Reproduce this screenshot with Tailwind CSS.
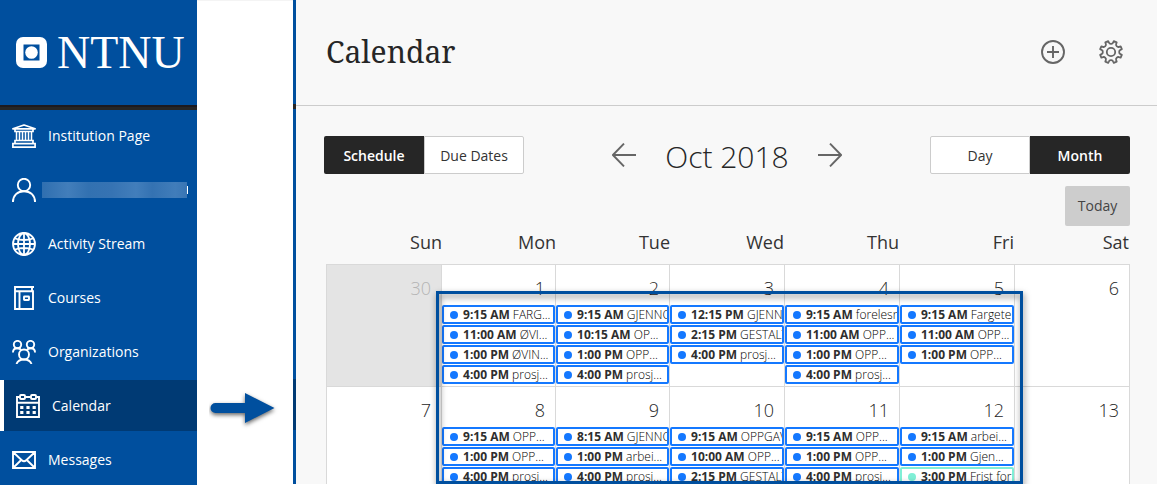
<!DOCTYPE html>
<html lang="en">
<head>
<meta charset="utf-8">
<meta name="viewport" content="width=device-width, initial-scale=1">
<title>Calendar</title>
<script src="https://cdn.jsdelivr.net/npm/@tailwindcss/browser@4"></script>
</head>
<body class="flex h-screen overflow-hidden bg-white font-['Open_Sans',sans-serif] text-[#262626]">

<!-- Sidebar -->
<aside class="w-[197px] shrink-0 overflow-hidden bg-[#004f9e] text-white">
  <a href="#" class="flex h-[105px] items-center gap-2.5 pl-4" aria-label="NTNU">
    <svg class="size-[31px] shrink-0" viewBox="0 0 31 31" aria-hidden="true">
      <rect width="31" height="31" rx="7" fill="#fff"/>
      <rect x="7.5" y="7.5" width="16" height="16" fill="#004f9e"/>
      <circle cx="15.5" cy="15.5" r="6.3" fill="#fff"/>
    </svg>
    <span class="font-['Liberation_Serif',serif] text-[46px] leading-[48px]">NTNU</span>
  </a>
  <div class="h-[5px] border-t-2 border-[#1c1a20] bg-[#262626]"></div>
  <nav class="flex flex-col gap-[3px] text-sm">
    <a href="#" class="flex h-[51px] items-center gap-3 pl-3">
      <svg class="size-6 shrink-0" viewBox="0 0 24 24" fill="none" stroke="#fff" stroke-width="1.7" aria-hidden="true">
        <path d="M.9 4.800 12 1l11.100 3.800z" stroke-linejoin="round"/><path d="M3 5v2.500h18V5"/><path d="M4.500 7.500v8.500M7.500 7.500v8.500M10.500 7.500v8.500M13.500 7.500v8.500M16.500 7.500v8.500M19.500 7.500v8.500" stroke-width="1.500"/><path d="M3 16.500h18v3H3zM.9 19.700h22.200v3.400H.9z"/>
      </svg>
      Institution Page
    </a>
    <a href="#" class="flex h-[51px] items-center gap-1.5 pl-3" aria-label="Profile">
      <svg class="size-6 shrink-0" viewBox="0 0 24 24" fill="none" stroke="#fff" stroke-width="1.9" aria-hidden="true">
        <circle cx="12" cy="7" r="6.200"/><path d="M.95 24C.95 17.500 5.500 13.200 12 13.200S23.050 17.500 23.050 24"/>
      </svg>
      <span class="h-4 w-[145px] bg-[linear-gradient(90deg,#2f6fb0,#427ebb_18%,#3271b1_32%,#3673b3_48%,#427ebb_65%,#3472b2_76%,#417dba_92%,#3975b4)]"></span>
      <span class="-ml-1.5 h-2 w-px bg-white"></span>
    </a>
    <a href="#" class="flex h-[51px] items-center gap-3 pl-3">
      <svg class="size-6 shrink-0" viewBox="0 0 24 24" fill="none" stroke="#fff" stroke-width="1.8" aria-hidden="true">
        <circle cx="12" cy="12" r="11"/><ellipse cx="12" cy="12" rx="6" ry="11"/><path d="M12 1v22M1 12h22M3 6.500c5 2 13 2 18 0M3 17.500c5-2 13-2 18 0"/>
      </svg>
      Activity Stream
    </a>
    <a href="#" class="flex h-[51px] items-center gap-3 pl-3">
      <svg class="size-6 shrink-0" viewBox="0 0 24 24" fill="none" stroke="#fff" stroke-width="1.9" aria-hidden="true">
        <path d="M22 1H3v22h18V5.200H3M20 1v4M7.500 5.200v18"/><rect x="12" y="10.500" width="5" height="3.500" rx=".5"/>
      </svg>
      Courses
    </a>
    <a href="#" class="flex h-[51px] items-center gap-3 pl-3">
      <svg class="size-6 shrink-0" viewBox="0 0 24 24" fill="none" stroke="#fff" stroke-width="1.9" aria-hidden="true">
        <circle cx="5.500" cy="4.600" r="3.700"/><circle cx="18.500" cy="4.600" r="3.700"/><circle cx="12" cy="14.500" r="5"/><path d="M.95 12.500C.95 9.500 2.800 8.200 5.500 8.200c1.700 0 3 .7 3.800 2M23.050 12.500c0-3-1.850-4.300-4.550-4.300-1.700 0-3 .7-3.800 2M4.500 24c1-3 3.800-4.500 7.500-4.500s6.500 1.500 7.500 4.500"/>
      </svg>
      Organizations
    </a>
    <a href="#" aria-current="page" class="flex h-[51px] items-center gap-3 border-l-4 border-white bg-[#003a74] pl-3">
      <svg class="size-6 shrink-0" viewBox="0 0 24 24" fill="none" stroke="#fff" stroke-width="1.9" aria-hidden="true">
        <path d="M3.500 3H1v20h22V3h-2.500M9.500 3h5M1 8.800h22"/><rect x="4" y="1" width="5" height="4" rx="1"/><rect x="15" y="1" width="5" height="4" rx="1"/>
        <path d="M4.200 13.500h3.200M10.400 13.500h3.200M16.600 13.500h3.200M4.200 18.500h3.200M10.400 18.500h3.200M16.600 18.500h3.200" stroke-width="2.800"/>
      </svg>
      Calendar
    </a>
    <a href="#" class="flex h-[51px] items-center gap-3 pl-3">
      <svg class="size-6 shrink-0" viewBox="0 0 24 24" fill="none" stroke="#fff" stroke-width="1.900" aria-hidden="true">
        <path d="M1 4h22v16H1zM1 4l8.800 8.200c1.300 1.200 3.100 1.200 4.400 0L23 4M1 20l8.200-8M23 20l-8.200-8"/>
      </svg>
      Messages
    </a>
  </nav>
</aside>

<!-- Gap with the pointer arrow -->
<div class="flex w-24 shrink-0 items-start justify-center border-t border-[#f4f4f4] pt-[390px]">
  <svg class="h-10 w-[72px]" viewBox="0 0 72 40" aria-hidden="true">
    <path class="drop-shadow-[0_2px_2px_rgb(0_0_0/0.6)]" d="M6.500 12H36V2l29.500 15L36 32V22H6.500a5 5 0 0 1 0-10z" fill="#004f9e"/>
  </svg>
</div>

<!-- Edge of the collapsed sidebar -->
<div class="mb-px flex w-[3px] shrink-0 flex-col bg-[#004f9e]" aria-hidden="true">
  <div class="mt-[104px] h-[5px] bg-[#262626]"></div>
  <div class="mt-[270px] h-[51px] bg-[#003a74]"></div>
</div>

<main class="mb-px min-w-0 flex-1 overflow-hidden bg-[#f8f8f8]">
  <header class="flex h-[106px] items-center justify-between border-b border-[#ccc] pr-[34px] pb-0.5 pl-[30px]">
    <h1 class="font-['Noto_Serif','DejaVu_Serif',serif] text-[30px] leading-10">Calendar</h1>
    <div class="flex gap-[34px]">
      <button type="button" aria-label="Add">
        <svg class="size-6" viewBox="0 0 24 24" fill="none" stroke="#666" stroke-width="1.900"><circle cx="12" cy="12" r="11"/><path d="M12 6v12M6 12h12"/></svg>
      </button>
      <button type="button" aria-label="Settings">
        <svg class="size-6" viewBox="0 0 24 24" fill="none" stroke="#666" stroke-width="1.800" stroke-linejoin="round"><circle cx="12" cy="12" r="4.200"/><path id="gear" d=""/></svg>
      </button>
    </div>
  </header>

  <div class="pt-[30px] pr-[27px] pl-7">
    <div class="flex items-center justify-between text-sm">
      <div class="flex h-[38px]">
        <button type="button" aria-pressed="true" class="w-[100px] rounded-l-xs bg-[#262626] pt-0.5 font-semibold text-white">Schedule</button>
        <button type="button" aria-pressed="false" class="w-[100px] rounded-r-xs border border-[#ccc] bg-white pt-0.5 text-[#333]">Due Dates</button>
      </div>
      <div class="flex items-center gap-[29px]">
        <button type="button" aria-label="Previous month"><svg class="size-6" viewBox="0 0 24 24" fill="none" stroke="#666" stroke-width="1.900"><path d="M24 12H1M12 .6.900 12 12 23.400"/></svg></button>
        <h2 class="pt-1 text-[30px] leading-[34px] font-light whitespace-nowrap">Oct 2018</h2>
        <button type="button" aria-label="Next month"><svg class="size-6" viewBox="0 0 24 24" fill="none" stroke="#666" stroke-width="1.900"><path d="M0 12h23M12 .6 23.100 12 12 23.400"/></svg></button>
      </div>
      <div class="flex h-[38px]">
        <button type="button" aria-pressed="false" class="w-[100px] rounded-l-xs border border-[#ccc] bg-white pt-0.5 text-[#333]">Day</button>
        <button type="button" aria-pressed="true" class="w-[100px] rounded-r-xs bg-[#262626] pt-0.5 font-semibold text-white">Month</button>
      </div>
    </div>
    <div class="mt-3 flex justify-end">
      <button type="button" class="h-10 w-[65px] rounded-xs bg-[#cdcdcd] text-sm text-[#444]">Today</button>
    </div>

    <div class="relative ml-0.5">
      <table class="w-full table-fixed border-separate border-spacing-0">
        <colgroup>
          <col class="w-[14.43%]">
          <col class="w-[14.18%]" span="2">
          <col span="4">
        </colgroup>
        <thead>
          <tr class="h-[39px] text-lg text-[#333]">
            <th scope="col" class="border-b border-[#d9d9d9] p-0 pb-1.5 text-right font-normal">Sun</th>
            <th scope="col" class="border-b border-[#d9d9d9] p-0 pb-1.5 text-right font-normal">Mon</th>
            <th scope="col" class="border-b border-[#d9d9d9] p-0 pb-1.5 text-right font-normal">Tue</th>
            <th scope="col" class="border-b border-[#d9d9d9] p-0 pr-px pb-1.5 text-right font-normal">Wed</th>
            <th scope="col" class="border-b border-[#d9d9d9] p-0 pr-px pb-1.5 text-right font-normal">Thu</th>
            <th scope="col" class="border-b border-[#d9d9d9] p-0 pr-px pb-1.5 text-right font-normal">Fri</th>
            <th scope="col" class="border-b border-[#d9d9d9] p-0 pr-px pb-1.5 text-right font-normal">Sat</th>
          </tr>
        </thead>
        <tbody id="weeks"></tbody>
      </table>
      <!-- Frame around the working days -->
      <div class="pointer-events-none absolute top-[65px] right-[calc(100%/7-8px)] left-[calc(100%/7-5px)] h-[193px] border-3 border-[#004f9e] drop-shadow-[1px_3px_3px_rgb(0_0_0/0.5)]"></div>
    </div>
  </div>
</main>

<script>
const weeks = [
  [
    { day: 30, muted: true, events: [] },
    { day: 1, events: [['9:15 AM', 'FARG...'], ['11:00 AM', 'ØVI...'], ['1:00 PM', 'ØVIN...'], ['4:00 PM', 'prosj...']] },
    { day: 2, events: [['9:15 AM', 'GJENNO'], ['10:15 AM', 'OP...'], ['1:00 PM', 'OPP...'], ['4:00 PM', 'prosj...']] },
    { day: 3, events: [['12:15 PM', 'GJENN'], ['2:15 PM', 'GESTALT'], ['4:00 PM', 'prosj...']] },
    { day: 4, events: [['9:15 AM', 'forelesn'], ['11:00 AM', 'OPP...'], ['1:00 PM', 'OPP...'], ['4:00 PM', 'prosj...']] },
    { day: 5, events: [['9:15 AM', 'Fargete'], ['11:00 AM', 'OPP...'], ['1:00 PM', 'OPP...']] },
    { day: 6, events: [] },
  ],
  [
    { day: 7, events: [] },
    { day: 8, events: [['9:15 AM', 'OPP...'], ['1:00 PM', 'OPP...'], ['4:00 PM', 'prosj...']] },
    { day: 9, events: [['8:15 AM', 'GJENNO'], ['1:00 PM', 'arbei...'], ['4:00 PM', 'prosj...']] },
    { day: 10, events: [['9:15 AM', 'OPPGAV'], ['10:00 AM', 'OPP...'], ['2:15 PM', 'GESTALT']] },
    { day: 11, events: [['9:15 AM', 'OPP...'], ['1:00 PM', 'OPP...'], ['4:00 PM', 'prosj...']] },
    { day: 12, events: [['9:15 AM', 'arbei...'], ['1:00 PM', 'Gjen...'], ['3:00 PM', 'Frist for', true]] },
    { day: 13, events: [] },
  ],
];

const eventHtml = ([time, title, due]) => `
  <li><button type="button" class="flex h-[19px] w-full items-center gap-[5px] overflow-hidden rounded-xs border-2 bg-white pl-1.5 text-xs whitespace-nowrap ${due ? 'border-[#80efd6]' : 'border-[#1478ff]'}">
    <span class="size-2 shrink-0 rounded-full ${due ? 'bg-[#80efd6]' : 'bg-[#1478ff]'}"></span>
    <span class="font-light text-black"><b class="font-bold text-[#2e2e2e]">${time}</b> ${title}</span>
  </button></li>`;

const cellHtml = (cell, i) => `
  <td class="h-[122px] border-r border-b border-[#d9d9d9] p-0 align-top ${i === 0 ? 'border-l' : ''} ${cell.muted ? 'bg-[#e4e4e4] text-[#b4b4b4]' : 'bg-white'}">
    <div class="h-10 pt-[9px] pr-2.5 text-right text-lg font-light">${cell.day}</div>
    <ul class="flex flex-col gap-px">${cell.events.map(eventHtml).join('')}</ul>
  </td>`;

document.getElementById('weeks').innerHTML = weeks.map(w => `<tr>${w.map(cellHtml).join('')}</tr>`).join('');

// Outline of the eight-toothed settings wheel, with a rounded valley between teeth
const at = (deg, r) => {
  const t = deg * Math.PI / 180;
  return (12 + r * Math.cos(t)).toFixed(2) + ' ' + (12 + r * Math.sin(t)).toFixed(2);
};
let outline = '';
for (let k = 0; k < 8; k++) {
  const c = k * 45 + 22.5;
  outline += (k ? 'L' : 'M') + at(c - 10, 9.6) + 'L' + at(c - 8, 11.2) + 'L' + at(c + 8, 11.2) + 'L' + at(c + 10, 9.6)
    + 'Q' + at(c + 12, 8.2) + ' ' + at(c + 22.5, 8.2) + 'Q' + at(c + 33, 8.2) + ' ' + at(c + 35, 9.6);
}
document.getElementById('gear').setAttribute('d', outline + 'z');
</script>
</body>
</html>
